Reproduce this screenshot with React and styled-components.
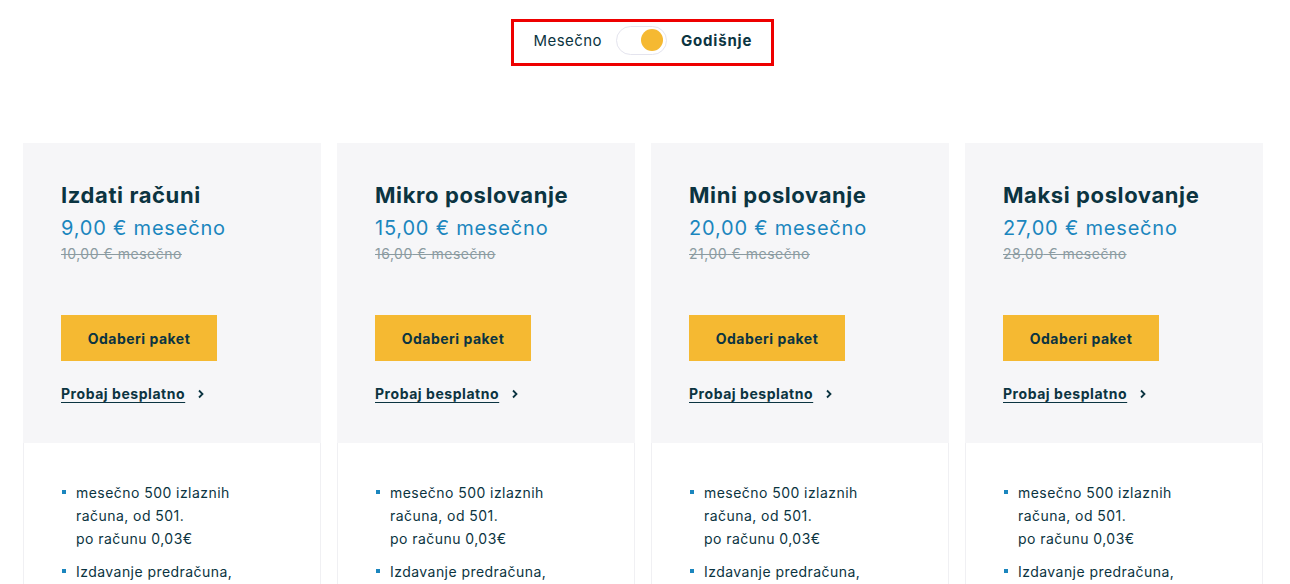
import styled, { createGlobalStyle } from "styled-components";

const GlobalStyle = createGlobalStyle`
  html, body {
    margin: 0;
    padding: 0;
    background: #ffffff;
    font-family: Inter, "Noto Sans", sans-serif;
    color: #0b3441;
  }
`;

const plans = [
  { name: "Izdati računi", price: "9,00", old: "10,00" },
  { name: "Mikro poslovanje", price: "15,00", old: "16,00" },
  { name: "Mini poslovanje", price: "20,00", old: "21,00" },
  { name: "Maksi poslovanje", price: "27,00", old: "28,00" },
];

const features = [
  ["mesečno 500 izlaznih", "računa, od 501.", "po računu 0,03€"],
  ["Izdavanje predračuna,"],
];

const App = () => {
  return (
    <Page>
      <GlobalStyle />
      <SwitchRow>
        <SwitchBox>
          <SwitchLabel>Mesečno</SwitchLabel>
          <Toggle>
            <Knob />
          </Toggle>
          <SwitchLabel $active>Godišnje</SwitchLabel>
        </SwitchBox>
      </SwitchRow>
      <Grid>
        {plans.map((p) => (
          <Card key={p.name}>
            <CardTop>
              <Title>{p.name}</Title>
              <Price>{p.price} € mesečno</Price>
              <OldPrice>{p.old} € mesečno</OldPrice>
              <Button>Odaberi paket</Button>
              <TryLink>
                <span>Probaj besplatno</span>
                <svg width="8" height="10" viewBox="0 0 8 10">
                  <path d="M2 1.5 L5.5 5 L2 8.5" fill="none" stroke="#0b3441" strokeWidth="1.8" />
                </svg>
              </TryLink>
            </CardTop>
            <CardBody>
              <List>
                {features.map((f, i) => (
                  <Item key={i}>
                    {f.map((line) => (
                      <div key={line}>{line}</div>
                    ))}
                  </Item>
                ))}
              </List>
            </CardBody>
          </Card>
        ))}
      </Grid>
    </Page>
  );
};

const Page = styled.div`
  width: 1290px;
  height: 584px;
  overflow: hidden;
`;

const SwitchRow = styled.div`
  display: flex;
  justify-content: center;
  padding-top: 19px;
  padding-right: 6px;
`;

const SwitchBox = styled.div`
  box-sizing: border-box;
  width: 263px;
  height: 47px;
  border: 3px solid #ee0000;
  display: flex;
  align-items: center;
  padding-left: 20px;
  padding-bottom: 5px;
  gap: 14px;
`;

const SwitchLabel = styled.span`
  font-size: 15px;
  font-weight: ${(p) => (p.$active ? 700 : 400)};
  letter-spacing: ${(p) => (p.$active ? "0.8px" : "0.45px")};
  color: #0b3441;
`;

const Toggle = styled.div`
  box-sizing: border-box;
  width: 51px;
  height: 29px;
  border: 1px solid #e4e4ee;
  border-radius: 15px;
  background: #fff;
  display: flex;
  align-items: center;
  justify-content: flex-end;
  padding-right: 3px;
`;

const Knob = styled.div`
  width: 22px;
  height: 22px;
  border-radius: 50%;
  background: #f5b932;
`;

const Grid = styled.div`
  display: grid;
  grid-template-columns: repeat(4, 298px);
  gap: 16px;
  padding-left: 23px;
  margin-top: 77px;
`;

const Card = styled.div`
  display: flex;
  flex-direction: column;
`;

const CardTop = styled.div`
  background: #f6f6f8;
  height: 300px;
  box-sizing: border-box;
  padding: 38px 0 0 38px;
  display: flex;
  flex-direction: column;
  align-items: flex-start;
`;

const Title = styled.h2`
  margin: 0;
  font-size: 22px;
  line-height: 28px;
  font-weight: 700;
  color: #0b3441;
  letter-spacing: 0.6px;
`;

const Price = styled.div`
  margin-top: 6px;
  font-size: 20px;
  line-height: 26px;
  color: #1b86be;
  letter-spacing: 0.8px;
`;

const OldPrice = styled.div`
  margin-top: 4px;
  font-size: 14px;
  line-height: 18px;
  color: #8b9ba1;
  text-decoration: line-through;
  letter-spacing: 0.5px;
`;

const Button = styled.button`
  margin-top: 52px;
  width: 156px;
  height: 46px;
  border: none;
  background: #f5b932;
  color: #0b3441;
  font-family: inherit;
  font-size: 14px;
  font-weight: 700;
  letter-spacing: 0.5px;
  cursor: pointer;
`;

const TryLink = styled.a`
  margin-top: 24px;
  display: flex;
  align-items: center;
  gap: 12px;
  font-size: 14px;
  font-weight: 700;
  letter-spacing: 0.55px;
  color: #0b3441;
  cursor: pointer;

  span {
    text-decoration: underline;
    text-underline-offset: 3px;
  }
`;

const CardBody = styled.div`
  border-left: 1px solid #f0f0f3;
  border-right: 1px solid #f0f0f3;
  padding: 38px 0 0 38px;
  height: 200px;
`;

const List = styled.ul`
  list-style: none;
  margin: 0;
  padding: 0;
`;

const Item = styled.li`
  position: relative;
  padding-left: 14px;
  font-size: 14px;
  line-height: 23px;
  letter-spacing: 0.45px;
  color: #0b3441;
  margin-bottom: 10px;

  &::before {
    content: "";
    position: absolute;
    left: 0;
    top: 9px;
    width: 4px;
    height: 4px;
    background: #1b86be;
  }
`;

export default App;
